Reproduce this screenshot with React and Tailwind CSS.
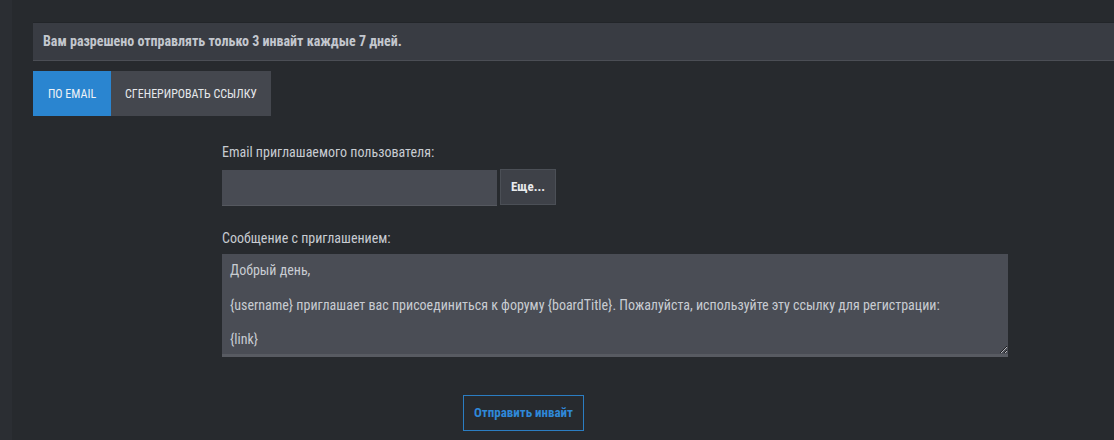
export default function App() {
  const msg =
    "Добрый день,\n\n{username} приглашает вас присоединиться к форуму {boardTitle}. Пожалуйста, используйте эту ссылку для регистрации:\n\n{link}";
  return (
    <div className="w-[1114px] h-[440px] flex bg-[#272a2e] font-['Roboto_Condensed',Roboto,sans-serif] [font-stretch:condensed] overflow-hidden">
      <div className="w-[12px] shrink-0 bg-[#2b2e33]"></div>
      <div className="flex-1 pl-[21px] pt-[22px]">
        <div className="border-t border-t-[#222529] border-b border-b-[#4b4e55] bg-[#393c43] h-[39px] flex items-center pl-[10px]">
          <span className="text-[14px] font-bold text-[#c3c7ce]">
            Вам разрешено отправлять только 3 инвайт каждые 7 дней.
          </span>
        </div>
        <div className="mt-[10px] flex h-[45px]">
          <div className="w-[78px] bg-[#2a85d0] flex items-center justify-center text-[12px] text-[#eef2f6] uppercase">
            По Email
          </div>
          <div className="w-[160px] bg-[#44474e] flex items-center justify-center text-[12px] text-[#e6e8eb] uppercase">
            Сгенерировать ссылку
          </div>
        </div>
        <div className="pl-[189px] pt-[27px]">
          <div className="text-[14px] text-[#c8ccd2] leading-[18px]">Email приглашаемого пользователя:</div>
          <div className="mt-[9px] flex items-start gap-[3px]">
            <input className="w-[275px] h-[36px] bg-[#484b53] border-b border-b-[#55585f] outline-none px-2 text-[14px] text-[#c8ccd2]" />
            <button className="-mt-[1px] w-[56px] h-[36px] bg-[#3e4148] border border-[#4b4f56] text-[13px] font-bold text-[#e8eaed]">
              Еще...
            </button>
          </div>
          <div className="mt-[23px] text-[14px] text-[#c8ccd2] leading-[18px]">Сообщение с приглашением:</div>
          <textarea
            className="mt-[7px] block w-[786px] h-[103px] bg-[#4a4d55] border-b-[3px] border-b-[#585b62] outline-none px-[8px] pt-[8px] text-[14px] leading-[17.25px] text-[#c8ccd2] resize-y"
            defaultValue={msg}
          />
          <div className="mt-[38px] pl-[241px]">
            <button className="w-[121px] h-[36px] border border-[#2b7dc2] text-[13px] font-bold text-[#2f88d8] bg-transparent">
              Отправить инвайт
            </button>
          </div>
        </div>
      </div>
    </div>
  );
}
